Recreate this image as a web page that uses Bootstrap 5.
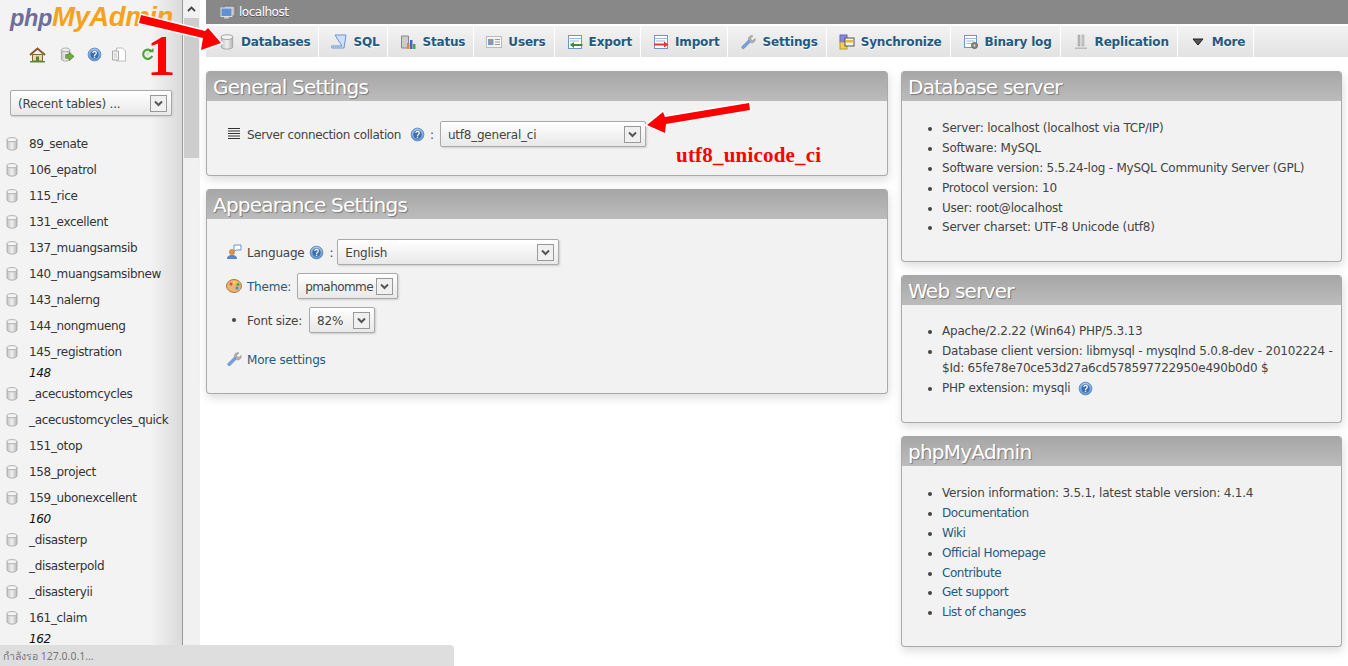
<!DOCTYPE html>
<html lang="en">
<head>
<meta charset="utf-8">
<title>phpMyAdmin</title>
<link href="https://cdn.jsdelivr.net/npm/bootstrap@5.3.0/dist/css/bootstrap.min.css" rel="stylesheet">
<style>
html,body{height:666px;overflow:hidden;background:#fff}
body{font-family:"DejaVu Sans",sans-serif;font-size:12px;color:#444;letter-spacing:-.22px}
a{color:#235a81;text-decoration:none}
.shell{height:666px}
.nav-side{width:183px;height:666px;flex:none;overflow:hidden;background:linear-gradient(to right,#f3f3f3 0,#f3f3f3 150px,#dadada 182px);border-right:1px solid #999}
.sb{width:17px;flex:none;height:666px;background:#f1f1f1;margin-right:6px}
.sb-up{height:18px;display:flex;align-items:center;justify-content:center}
.sb-thumb{height:140px;background:#cdcdcd;margin:0 1px 0 1px}
.logo{height:36px;padding:1px 0 0 10px;font-family:"Liberation Sans",sans-serif;font-weight:700;font-style:italic;line-height:32px;letter-spacing:-.4px;white-space:nowrap}
.logo-php{color:#6c6e9e;font-size:23.5px}
.logo-my{color:#f5a21c;font-size:27.5px}
.side-tools{height:38px;padding:11px 0 0 29px;gap:14px}
.tool-help{margin-left:-2px}
.tool-docs{margin-left:-5px}
.tool-redo{margin-left:0}
.side-pick{padding:16px 10px 0 10px;height:54px}
.sel{appearance:none;-webkit-appearance:none;display:block;height:26px;padding:2px 24px 0 7px;border:1px solid #aaa;border-radius:2px;color:#444;font:inherit;font-size:12px;letter-spacing:inherit;background-color:#fff;background-image:url("data:image/svg+xml,%3Csvg xmlns='http://www.w3.org/2000/svg' width='17' height='17'%3E%3Crect x='.5' y='.5' width='16' height='16' fill='%23f0f0f0' stroke='%23999'/%3E%3Cpath d='M5 6.500l3.500 3.500L12 6.500' fill='none' stroke='%23555' stroke-width='2'/%3E%3C/svg%3E"),linear-gradient(#fff,#e8e8e8);background-repeat:no-repeat;background-position:right 4px center,0 0;box-shadow:1px 1px 2px #ccc}
.sel-side{width:162px}
.sel-coll{width:206px;margin-left:1px}
.sel-lang{width:222px;margin-left:-1px}
.sel-theme{width:101px;padding-right:20px;margin-left:1px;letter-spacing:-.55px}
.sel-size{width:66px;margin-left:2px}
.db-list{list-style:none;margin:3px 0 0;padding:0;color:#333;letter-spacing:-.34px}
.db-list li{height:26px;display:flex;align-items:center;gap:11px;padding-left:6px;white-space:nowrap}
.db-list li.db-sub{height:16px;padding-left:29px;font-style:italic;color:#111}
.crumb{height:24px;background:#888;color:#fff;display:flex;align-items:center;gap:3px;padding-left:14px;text-shadow:0 1px 0 #555;letter-spacing:-.5px}
.tabs{height:31px;margin-top:2px;background:linear-gradient(#f3f3f3,#e2e2e2);list-style:none;padding:0}
.tabs li{height:31px;display:flex;align-items:center;gap:6px;padding:1px 8px 0 12px;border-right:1px solid #fff;font-weight:700;color:#235a81;font-size:12px;letter-spacing:-.17px;white-space:nowrap;text-shadow:0 1px 0 #fff}
.tabs li:first-child{padding-left:13px}
.cols{gap:13px;padding-top:14px}
.col-left{width:682px;flex:none}
.col-right{width:441px;flex:none}
.pane{background:#f2f2f2;border:1px solid #aaa;border-top:0;border-radius:4px;box-shadow:1px 4px 10px #ddd;margin-bottom:13px;overflow:hidden}
.pane-title{height:30px;margin:0 -1px;background:linear-gradient(#a6a6a6,#bcbcbc);color:#fff;font-size:20px;font-weight:400;line-height:33px;padding-left:7px;letter-spacing:-.76px;text-shadow:1px 1px 1px #777}
.h-a{height:105px}.h-b{height:205px}.h-c{height:191px}.h-d{height:148px}.h-e{height:211px}
.setrow{display:flex;align-items:center;gap:5px;height:34px}
.setrow-ic{width:18px;flex:none;display:flex;justify-content:center;margin-right:-1px}
.setrow>span:not(.setrow-ic),.setrow>a{padding-top:2px}
.coll-label{letter-spacing:-.37px}
.body-a{padding:20px 0 0 18px}
.body-b{padding:16px 0 0 18px}
.more-row{margin-top:5px}
.info{margin:0;padding:19px 4px 0 40px;list-style:disc;color:#444}
.info-web{padding-top:18px}
.info li{line-height:17px;margin-bottom:2.9px}
.info a{letter-spacing:-.45px}
.over{position:absolute;left:0;top:0;pointer-events:none;z-index:5}
.note-one{position:absolute;left:147px;top:23px;color:#f00;font:700 57px/66px "Liberation Serif",serif;z-index:6;letter-spacing:0}
.note-coll{position:absolute;left:676px;top:143px;color:#f00;font:700 21px/24px "Liberation Serif",serif;z-index:6;letter-spacing:.2px}
.status{position:absolute;left:0;bottom:0;width:454px;height:21px;background:#dedede;border-top-right-radius:4px;color:#777;font-size:10.5px;line-height:22px;padding-left:3px;z-index:7;font-family:"Noto Sans","DejaVu Sans",sans-serif;letter-spacing:0}
</style>
</head>
<body>
<svg width="0" height="0" class="position-absolute">
<defs>
<linearGradient id="gc" x1="0" x2="1" y1="0" y2="0"><stop offset="0" stop-color="#c4c4c4"/><stop offset=".5" stop-color="#f0f0f0"/><stop offset="1" stop-color="#b4b4b4"/></linearGradient>
<radialGradient id="gh" cx=".5" cy=".35" r=".7"><stop offset="0" stop-color="#dbe8f7"/><stop offset="1" stop-color="#4f86c6"/></radialGradient>
<symbol id="i-db" viewBox="1.500 .5 13 15.500"><path d="M2.500 3.500v9c0 1.500 2.500 2.500 5.500 2.500s5.500-1 5.500-2.500v-9z" fill="url(#gc)" stroke="#aaa"/><ellipse cx="8" cy="3.500" rx="5.500" ry="2.300" fill="#f4f4f4" stroke="#aaa"/></symbol>
<symbol id="i-help" viewBox="0 0 16 16"><circle cx="8" cy="8" r="6.800" fill="url(#gh)" stroke="#5b8ec9"/><circle cx="8" cy="8" r="4.500" fill="#3d6fb0"/><path d="M6.200 6.500c0-2.300 3.700-2.300 3.700 0 0 1.500-1.900 1.400-1.900 3" fill="none" stroke="#fff" stroke-width="1.300"/><rect x="7.300" y="10.300" width="1.400" height="1.400" fill="#fff"/></symbol>
<symbol id="i-wrench" viewBox="0 0 16 16"><path d="M2 12.500L9 5.500l2 2-7 7c-1 1-3-1-2-2z" fill="#7a9fdb" stroke="#5d82c0" stroke-width=".6"/><path d="M8.500 5.500c-.5-2.500 2-4.500 4.500-3.500l-2.500 2 .5 2 2 .5 2-2c.7 2.800-1.500 4.800-4 4.200z" fill="#b4b4b4" stroke="#8a8a8a" stroke-width=".6"/></symbol>
</defs>
</svg>
<div class="shell d-flex">
  <aside class="nav-side">
    <div class="logo"><span class="logo-php">php</span><span class="logo-my">MyAdmin</span></div>
    <div class="side-tools d-flex align-items-start">
      <svg width="17" height="16" viewBox="0 0 17 16"><path d="M1 8l7.500-6.500L16 8" fill="none" stroke="#8a5a2b" stroke-width="2"/><path d="M3.500 7.500h10V14h-10z" fill="#e9d8a8" stroke="#7a6a3a"/><rect x="7" y="9.500" width="3" height="4.500" fill="#5d7f3a"/><rect x="1" y="14" width="15" height="1.500" fill="#5d8a3a"/></svg>
      <svg width="15" height="16" viewBox="0 0 16 17"><path d="M1.500 3v10c0 1.200 2 2 4.500 2s4.500-.8 4.500-2V3z" fill="url(#gc)" stroke="#aaa"/><ellipse cx="6" cy="3" rx="4.500" ry="2" fill="#eee" stroke="#aaa"/><path d="M6 8h4V5.500L15 10l-5 4.500V12H6z" fill="#6fae3e" stroke="#4c8026" stroke-width=".7"/></svg>
      <svg class="tool-help" width="15" height="15"><use href="#i-help"/></svg>
      <svg class="tool-docs" width="16" height="16" viewBox="0 0 16 16"><path d="M5.500 1h6l3 3v10h-9z" fill="#fff" stroke="#bbb"/><path d="M1.500 4h6v9h-6z" fill="#f3f3f3" stroke="#aaa"/><rect x="3" y="6" width="3" height="5" fill="#ddd"/></svg>
      <svg class="tool-redo" width="13" height="14" viewBox="0 0 14 15"><path d="M11.500 5A5 5 0 1 0 12 9.500" fill="none" stroke="#4ea33a" stroke-width="2.400"/><path d="M8 5.500h5.500V1z" fill="#4ea33a"/><circle cx="7" cy="7.500" r="1.800" fill="#cde8b8"/></svg>
    </div>
    <div class="side-pick"><select class="sel sel-side" aria-label="Recent tables"><option>(Recent tables) ...</option></select></div>
    <ul class="db-list">
      <li><svg width="12" height="14"><use href="#i-db"/></svg>89_senate</li>
      <li><svg width="12" height="14"><use href="#i-db"/></svg>106_epatrol</li>
      <li><svg width="12" height="14"><use href="#i-db"/></svg>115_rice</li>
      <li><svg width="12" height="14"><use href="#i-db"/></svg>131_excellent</li>
      <li><svg width="12" height="14"><use href="#i-db"/></svg>137_muangsamsib</li>
      <li><svg width="12" height="14"><use href="#i-db"/></svg>140_muangsamsibnew</li>
      <li><svg width="12" height="14"><use href="#i-db"/></svg>143_nalerng</li>
      <li><svg width="12" height="14"><use href="#i-db"/></svg>144_nongmueng</li>
      <li><svg width="12" height="14"><use href="#i-db"/></svg>145_registration</li>
      <li class="db-sub">148</li>
      <li><svg width="12" height="14"><use href="#i-db"/></svg>_acecustomcycles</li>
      <li><svg width="12" height="14"><use href="#i-db"/></svg>_acecustomcycles_quick</li>
      <li><svg width="12" height="14"><use href="#i-db"/></svg>151_otop</li>
      <li><svg width="12" height="14"><use href="#i-db"/></svg>158_project</li>
      <li><svg width="12" height="14"><use href="#i-db"/></svg>159_ubonexcellent</li>
      <li class="db-sub">160</li>
      <li><svg width="12" height="14"><use href="#i-db"/></svg>_disasterp</li>
      <li><svg width="12" height="14"><use href="#i-db"/></svg>_disasterpold</li>
      <li><svg width="12" height="14"><use href="#i-db"/></svg>_disasteryii</li>
      <li><svg width="12" height="14"><use href="#i-db"/></svg>161_claim</li>
      <li class="db-sub">162</li>
    </ul>
  </aside>
  <div class="sb">
    <div class="sb-up"><svg width="9" height="6" viewBox="0 0 9 6"><path d="M1 5l3.500-3.500L8 5" fill="none" stroke="#444" stroke-width="1.800"/></svg></div>
    <div class="sb-thumb"></div>
  </div>
  <main class="flex-grow-1" style="min-width:0">
    <div class="crumb">
      <svg width="16" height="15" viewBox="0 0 16 15"><rect x="4" y="1" width="11" height="10" fill="#bbb" stroke="#777"/><rect x="1" y="3" width="11" height="8.500" fill="#5d93d6" stroke="#ddd"/><rect x="4" y="12" width="5" height="1.500" fill="#ccc"/></svg>
      <span>localhost</span>
    </div>
    <ul class="tabs d-flex mb-0">
      <li><svg width="16" height="16"><use href="#i-db"/></svg>Databases</li>
      <li><svg width="16" height="16" viewBox="0 0 16 16"><path d="M4 1h11l-2 13H1.500c-1 0-1.500-1-1-2h10.500z" fill="#cfe0f7" stroke="#6b95cf"/></svg>SQL</li>
      <li><svg width="16" height="16" viewBox="0 0 16 16"><path d="M1.500 2h7v12h-7z" fill="#ccc" stroke="#888"/><rect x="7" y="9" width="2.500" height="6" fill="#d83"/><rect x="10" y="6" width="2.500" height="9" fill="#46c"/><rect x="13" y="10" width="2.500" height="5" fill="#4a4"/></svg>Status</li>
      <li><svg width="16" height="16" viewBox="0 0 16 16"><rect x=".5" y="2.500" width="15" height="11" fill="#f6f6f6" stroke="#bbb"/><rect x="2" y="5" width="5.500" height="6" fill="#6d9de0"/><circle cx="4.700" cy="7.500" r="1.500" fill="#d98a3a"/><path d="M9 5.500h5M9 8h5M9 10.500h5" stroke="#999"/></svg>Users</li>
      <li><svg width="16" height="16" viewBox="0 0 16 16"><rect x="1.500" y="1.500" width="13" height="13" fill="#fff" stroke="#6b95cf"/><path d="M1.500 4.500h13M3 7h9M3 10h4" stroke="#9db6da"/><path d="M15.500 10H7V8l-4 3 4 3v-2h8.500z" fill="#3e8a3a"/></svg>Export</li>
      <li><svg width="16" height="16" viewBox="0 0 16 16"><rect x="1.500" y="1.500" width="13" height="13" fill="#fff" stroke="#6b95cf"/><path d="M1.500 4.500h13M3 7h9" stroke="#9db6da"/><path d="M1 9.500h10v-2l4.500 3-4.500 3v-2H1z" fill="#e33"/></svg>Import</li>
      <li><svg width="16" height="16"><use href="#i-wrench"/></svg>Settings</li>
      <li><svg width="16" height="16" viewBox="0 0 16 16"><rect x="1" y="1" width="7" height="7" fill="#8a84e0" stroke="#6660b8"/><rect x="1" y="8" width="7" height="7" fill="#f1cf55" stroke="#b89a2a"/><rect x="6" y="4" width="9" height="8" fill="#f4f4f4" stroke="#555"/><rect x="7" y="6" width="7" height="2.500" fill="#e6b93a"/></svg>Synchronize</li>
      <li><svg width="16" height="16" viewBox="0 0 16 16"><rect x="1.500" y="1.500" width="12" height="12" fill="#fff" stroke="#6b95cf"/><path d="M1.500 4.500h12M3.500 7h8M3.500 9.500h8" stroke="#9db6da"/><circle cx="11.500" cy="11.500" r="3" fill="#888" stroke="#666"/><circle cx="11.500" cy="11.500" r="1" fill="#ddd"/></svg>Binary log</li>
      <li><svg width="16" height="16" viewBox="0 0 16 16"><rect x="5" y="1" width="2" height="11" fill="#bbb" stroke="#999" stroke-width=".5"/><rect x="9" y="1" width="2" height="11" fill="#ccc" stroke="#999" stroke-width=".5"/><path d="M2 13.500h12v1.500H2z" fill="#bbb"/></svg>Replication</li>
      <li><svg width="16" height="16" viewBox="0 0 16 16"><path d="M3 5h10l-5 6z" fill="#555" stroke="#222"/></svg>More</li>
    </ul>
    <div class="cols d-flex">
      <div class="col-left">
        <section class="pane h-a">
          <h2 class="pane-title">General Settings</h2>
          <div class="body-a">
            <div class="setrow" style="height:26px">
              <span class="setrow-ic"><svg width="12" height="12" viewBox="0 0 12 12"><path d="M0 .5h12M0 3h12M0 5.500h12M0 8h12M0 10.500h12" stroke="#333"/></svg></span>
              <span class="coll-label">Server connection collation</span>
              <svg width="15" height="15" class="ms-1"><use href="#i-help"/></svg>
              <span>:</span>
              <select class="sel sel-coll" aria-label="Collation"><option>utf8_general_ci</option></select>
            </div>
          </div>
        </section>
        <section class="pane h-b">
          <h2 class="pane-title">Appearance Settings</h2>
          <div class="body-b">
            <div class="setrow">
              <span class="setrow-ic"><svg width="16" height="16" viewBox="0 0 16 16"><path d="M8 1h7v5H10l-2 2z" fill="#fff" stroke="#6b95cf"/><circle cx="6" cy="8" r="3" fill="#d8914a"/><path d="M1 15c0-3 2-4 5-4s5 1 5 4z" fill="#4f86d6"/></svg></span>
              <span>Language</span>
              <svg width="15" height="15"><use href="#i-help"/></svg>
              <span>:</span>
              <select class="sel sel-lang" aria-label="Language"><option>English</option></select>
            </div>
            <div class="setrow">
              <span class="setrow-ic"><svg width="16" height="16" viewBox="0 0 16 16"><ellipse cx="8" cy="8" rx="7.500" ry="6.500" fill="#e9b477" stroke="#a87840"/><circle cx="5" cy="6" r="1.500" fill="#e44"/><circle cx="8.500" cy="4.500" r="1.500" fill="#ed3"/><circle cx="12" cy="6.500" r="1.500" fill="#4a4"/><circle cx="11" cy="10" r="1.500" fill="#48c"/></svg></span>
              <a href="#">Theme:</a>
              <select class="sel sel-theme" aria-label="Theme"><option>pmahomme</option></select>
            </div>
            <div class="setrow">
              <span class="setrow-ic"><svg width="6" height="6"><circle cx="3" cy="3" r="2" fill="#444"/></svg></span>
              <span>Font size:</span>
              <select class="sel sel-size" aria-label="Font size"><option>82%</option></select>
            </div>
            <div class="setrow more-row">
              <span class="setrow-ic"><svg width="16" height="16"><use href="#i-wrench"/></svg></span>
              <a href="#">More settings</a>
            </div>
          </div>
        </section>
      </div>
      <div class="col-right">
        <section class="pane h-c">
          <h2 class="pane-title">Database server</h2>
          <ul class="info">
            <li>Server: localhost (localhost via TCP/IP)</li>
            <li>Software: MySQL</li>
            <li>Software version: 5.5.24-log - MySQL Community Server (GPL)</li>
            <li>Protocol version: 10</li>
            <li>User: root@localhost</li>
            <li>Server charset: UTF-8 Unicode (utf8)</li>
          </ul>
        </section>
        <section class="pane h-d">
          <h2 class="pane-title">Web server</h2>
          <ul class="info info-web">
            <li>Apache/2.2.22 (Win64) PHP/5.3.13</li>
            <li>Database client version: libmysql - mysqlnd 5.0.8-dev - 20102224 - $Id: 65fe78e70ce53d27a6cd578597722950e490b0d0 $</li>
            <li>PHP extension: mysqli <svg width="15" height="15" class="ms-1 align-middle"><use href="#i-help"/></svg></li>
          </ul>
        </section>
        <section class="pane h-e">
          <h2 class="pane-title">phpMyAdmin</h2>
          <ul class="info">
            <li>Version information: 3.5.1, latest stable version: 4.1.4</li>
            <li><a href="#">Documentation</a></li>
            <li><a href="#">Wiki</a></li>
            <li><a href="#">Official Homepage</a></li>
            <li><a href="#">Contribute</a></li>
            <li><a href="#">Get support</a></li>
            <li><a href="#">List of changes</a></li>
          </ul>
        </section>
      </div>
    </div>
  </main>
</div>
<svg class="over" width="1348" height="666" viewBox="0 0 1348 666">
  <path d="M141 15L139 23L203 38L201 50L221 43L208 28L205 31Z" fill="#f00" stroke="#fff" stroke-width="3" paint-order="stroke"/>
  <path d="M749 103L750 110L666 124L665 133L647 125L663 112L665 117Z" fill="#f00" stroke="#fff" stroke-width="3" paint-order="stroke"/>
</svg>
<div class="note-one">1</div>
<div class="note-coll">utf8_unicode_ci</div>
<div class="status">กำลังรอ 127.0.0.1...</div>
<script src="https://cdn.jsdelivr.net/npm/bootstrap@5.3.0/dist/js/bootstrap.bundle.min.js"></script>
</body>
</html>
